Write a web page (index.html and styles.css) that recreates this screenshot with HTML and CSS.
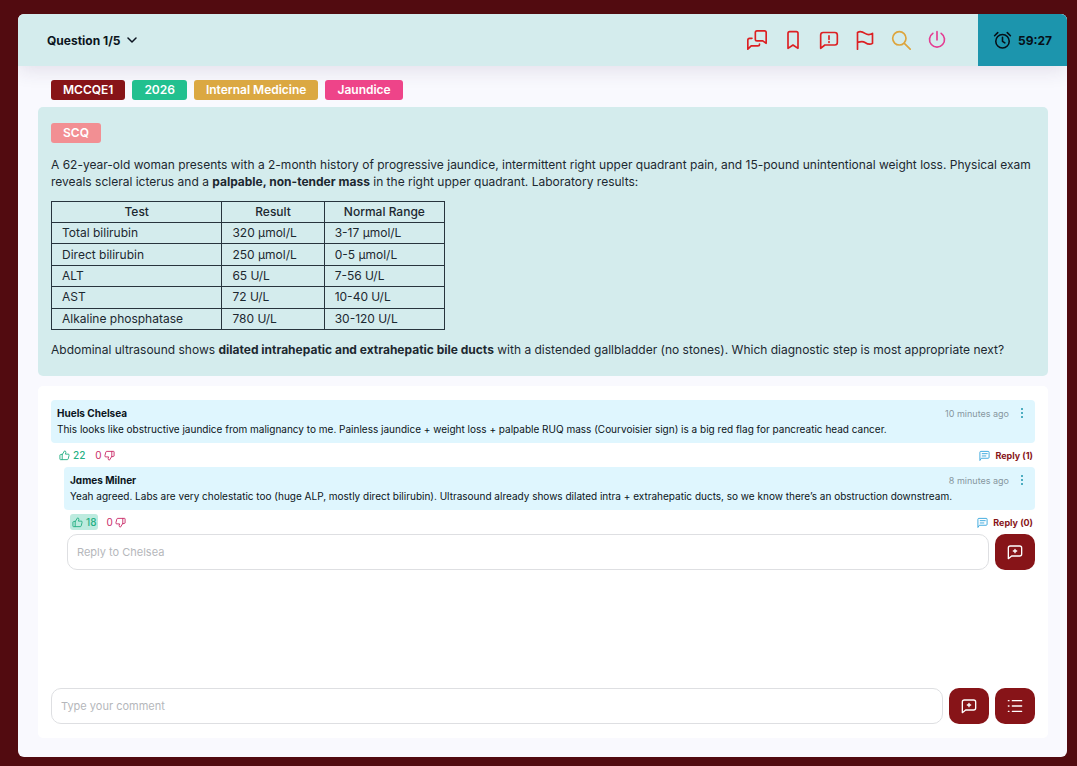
FILE: index.html
```html
<!DOCTYPE html>
<html lang="en">
<head>
  <meta charset="UTF-8" />
  <meta name="viewport" content="width=device-width, initial-scale=1.0"/>
  <title>Question 1/5</title>
  <link rel="stylesheet" href="styles.css">
</head>
<body>
  <!-- Shared icons -->
  <svg class="sprite" aria-hidden="true">
    <symbol id="thumb" viewBox="0 0 24 24">
      <path d="M7 10v11H3a1 1 0 0 1-1-1v-9a1 1 0 0 1 1-1zM7 10l5-8c2 0 3 1.300 3 3l-1 4h6a2 2 0 0 1 2 2.500l-2 8a2 2 0 0 1-2 1.500H7"/>
    </symbol>
    <symbol id="reply" viewBox="0 0 24 24">
      <path d="M2 22V5a2 2 0 0 1 2-2h16a2 2 0 0 1 2 2v11a2 2 0 0 1-2 2H6zM7 8h11M7 13h8"/>
    </symbol>
    <symbol id="add" viewBox="0 0 24 24">
      <path d="M2 22V6a3 3 0 0 1 3-3h14a3 3 0 0 1 3 3v9a3 3 0 0 1-3 3H7zM12 8v5M9.500 10.500h5"/>
    </symbol>
    <symbol id="dots" viewBox="0 0 4 12">
      <circle cx="2" cy="2" r="1"/><circle cx="2" cy="6" r="1"/><circle cx="2" cy="10" r="1"/>
    </symbol>
  </svg>

  <div class="main">
    <header class="topbar">
      <button class="question-select">
        Question 1/5
        <svg class="chevron" viewBox="0 0 10 6"><path d="M1 1l4 4 4-4"/></svg>
      </button>
      <div class="tools">
        <button class="tool" aria-label="Discussion">
          <svg viewBox="0 0 24 24"><path d="M10 3a2 2 0 0 1 2-2h9a2 2 0 0 1 2 2v13l-4-3h-7a2 2 0 0 1-2-2zM6 10H3a2 2 0 0 0-2 2v11l4-4h8a2 2 0 0 0 2-2"/></svg>
        </button>
        <button class="tool" aria-label="Bookmark">
          <svg viewBox="0 0 24 24"><path d="M18 22l-6-4-6 4V4a2 2 0 0 1 2-2h8a2 2 0 0 1 2 2z"/></svg>
        </button>
        <button class="tool" aria-label="Report">
          <svg viewBox="0 0 24 24"><path d="M2 22V6a3 3 0 0 1 3-3h14a3 3 0 0 1 3 3v9a3 3 0 0 1-3 3H7zM12 7v4M12 14v1"/></svg>
        </button>
        <button class="tool" aria-label="Flag">
          <svg viewBox="0 0 24 24"><path d="M3 23V3c3-2 6-1 9 1s6 2 9 0v12c-3 2-6 1-9-1s-6-1-9 0"/></svg>
        </button>
        <button class="tool gold" aria-label="Search">
          <svg viewBox="0 0 24 24"><circle cx="10" cy="10" r="8"/><path d="M16 16l7 7"/></svg>
        </button>
        <button class="tool pink" aria-label="End session">
          <svg viewBox="0 0 24 24"><path d="M12 2v10M7 4a9 9 0 1 0 10 0"/></svg>
        </button>
      </div>
      <div class="timer">
        <svg viewBox="0 0 24 24"><circle cx="12" cy="13" r="8.500"/><path d="M12 8v5l3 2M2 6l4-4M22 6l-4-4"/></svg>
        <span>59:27</span>
      </div>
    </header>

    <main class="content">
      <div class="tags">
        <span class="tag exam">MCCQE1</span>
        <span class="tag year">2026</span>
        <span class="tag subject">Internal Medicine</span>
        <span class="tag topic">Jaundice</span>
      </div>

      <section class="question">
        <span class="tag scq">SCQ</span>
        <p>A 62-year-old woman presents with a 2-month history of progressive jaundice, intermittent right upper quadrant pain, and 15-pound unintentional weight loss. Physical exam reveals scleral icterus and a <strong>palpable, non-tender mass</strong> in the right upper quadrant. Laboratory results:</p>
        <table>
          <thead>
            <tr><th>Test</th><th>Result</th><th>Normal Range</th></tr>
          </thead>
          <tbody>
            <tr><td>Total bilirubin</td><td>320 µmol/L</td><td>3-17 µmol/L</td></tr>
            <tr><td>Direct bilirubin</td><td>250 µmol/L</td><td>0-5 µmol/L</td></tr>
            <tr><td>ALT</td><td>65 U/L</td><td>7-56 U/L</td></tr>
            <tr><td>AST</td><td>72 U/L</td><td>10-40 U/L</td></tr>
            <tr><td>Alkaline phosphatase</td><td>780 U/L</td><td>30-120 U/L</td></tr>
          </tbody>
        </table>
        <p>Abdominal ultrasound shows <strong>dilated intrahepatic and extrahepatic bile ducts</strong> with a distended gallbladder (no stones). Which diagnostic step is most appropriate next?</p>
      </section>

      <section class="discussion">
        <article class="comment">
          <div class="bubble">
            <div class="bubble-head">
              <h2>Huels Chelsea</h2>
              <time>10 minutes ago</time>
              <button class="more" aria-label="More"><svg><use href="#dots"/></svg></button>
            </div>
            <p>This looks like obstructive jaundice from malignancy to me. Painless jaundice + weight loss + palpable RUQ mass (Courvoisier sign) is a big red flag for pancreatic head cancer.</p>
          </div>
          <div class="actions">
            <button class="like"><svg><use href="#thumb"/></svg>22</button>
            <button class="dislike">0<svg><use href="#thumb"/></svg></button>
            <button class="reply"><svg><use href="#reply"/></svg>Reply (1)</button>
          </div>
        </article>

        <article class="comment nested">
          <div class="bubble">
            <div class="bubble-head">
              <h2>James Milner</h2>
              <time>8 minutes ago</time>
              <button class="more" aria-label="More"><svg><use href="#dots"/></svg></button>
            </div>
            <p>Yeah agreed. Labs are very cholestatic too (huge ALP, mostly direct bilirubin). Ultrasound already shows dilated intra + extrahepatic ducts, so we know there’s an obstruction downstream.</p>
          </div>
          <div class="actions">
            <button class="like active"><svg><use href="#thumb"/></svg>18</button>
            <button class="dislike">0<svg><use href="#thumb"/></svg></button>
            <button class="reply"><svg><use href="#reply"/></svg>Reply (0)</button>
          </div>
        </article>

        <form class="write reply-form">
          <input type="text" placeholder="Reply to Chelsea" aria-label="Reply to Chelsea">
          <button type="button" class="square" aria-label="Send reply"><svg><use href="#add"/></svg></button>
        </form>

        <form class="write comment-form">
          <input type="text" placeholder="Type your comment" aria-label="Type your comment">
          <button type="button" class="square" aria-label="Add comment"><svg><use href="#add"/></svg></button>
          <button type="button" class="square" aria-label="Show list"><svg viewBox="0 0 24 24"><path d="M8 4h14M8 12h14M8 20h14M2 4h1M2 12h1M2 20h1"/></svg></button>
        </form>
      </section>
    </main>
  </div>
</body>
</html>
```
FILE: styles.css
```css
* {
  margin: 0;
  padding: 0;
  box-sizing: border-box;
  font-family: Inter, "Liberation Sans", sans-serif;
}

body {
  min-height: 100vh;
  padding: 14px 10px 9px 18px;
  display: flex;
  background-color: #520b10;
  color: #0b1420;
}

button {
  border: none;
  background: none;
  color: inherit;
  cursor: pointer;
}

svg {
  display: block;
  fill: none;
  stroke: currentColor;
  stroke-width: 2;
  stroke-linecap: round;
  stroke-linejoin: round;
}

.sprite {
  display: none;
}

.main {
  flex: 1;
  min-width: 0;
  display: flex;
  flex-direction: column;
  border-radius: 6px;
  overflow: hidden;
  background-color: #f9f9fe;
}

.topbar {
  height: 52px;
  display: flex;
  align-items: center;
  background-color: #d4eced;
  box-shadow: 0 4px 20px rgba(60, 30, 80, 0.12);
}

.question-select {
  display: flex;
  align-items: center;
  gap: 7px;
  margin-left: 29px;
  font-size: 12px;
  font-weight: 700;
}

.chevron {
  width: 10px;
  height: 6px;
  stroke-width: 1.500;
}

.tools {
  display: flex;
  gap: 16px;
  margin-left: auto;
  margin-right: 31px;
}

.tool {
  color: #dc2023;
}

.tool svg {
  width: 20px;
  height: 20px;
}

.tool.gold {
  color: #dda53d;
}

.tool.pink {
  color: #e43d92;
}

.timer {
  width: 89px;
  height: 100%;
  display: flex;
  align-items: center;
  justify-content: center;
  gap: 6px;
  background-color: #1c95ad;
  color: #071018;
  font-size: 12px;
  font-weight: 700;
}

.timer svg {
  width: 19px;
  height: 19px;
}

.content {
  flex: 1;
  display: flex;
  flex-direction: column;
  padding: 14px 19px 19px 20px;
}

.tags {
  display: flex;
  flex-wrap: wrap;
  gap: 7px;
  padding: 0 13px;
  margin-bottom: 7px;
}

.tag {
  display: inline-block;
  padding: 0 12px;
  border-radius: 3px;
  color: #fff;
  font-size: 12px;
  font-weight: 600;
  line-height: 20px;
}

.exam { background-color: #871418; }
.year { background-color: #22c08f; }
.subject { background-color: #dba842; }
.topic { background-color: #ee4489; }
.scq { background-color: #f28f93; }

.question {
  padding: 16px 13px 18px;
  border-radius: 5px;
  background-color: #d4eced;
  color: #1c2830;
  font-size: 12px;
}

.question p {
  margin-top: 11px;
  line-height: 17px;
}

.scq + p {
  margin-top: 13px;
}

.question strong {
  font-weight: 700;
}

.question table {
  width: 394px;
  height: 129px;
  margin-top: 11px;
  border-collapse: collapse;
}

.question th,
.question td {
  width: 102px;
  padding: 0 10px;
  border: 1px solid #27343d;
  line-height: 20px;
}

.question th {
  font-weight: 500;
}

.question th:first-child {
  width: 170px;
}

.question th:last-child {
  width: 120px;
}

.discussion {
  flex: 1;
  display: flex;
  flex-direction: column;
  margin-top: 10px;
  padding: 14px 13px;
  border-radius: 5px;
  background-color: #fff;
}

.comment.nested {
  margin-left: 13px;
}

.bubble {
  padding: 5px 11px 5px 6px;
  border-radius: 4px;
  background-color: #dff6fe;
}

.bubble-head {
  display: flex;
  align-items: center;
  height: 16px;
}

.bubble h2 {
  flex: 1;
  font-size: 10px;
  font-weight: 700;
}

.nested h2 {
  font-feature-settings: "cv11";
}

.bubble p {
  font-size: 10px;
  line-height: 17px;
}

.bubble time {
  color: #87979f;
  font-size: 9px;
}

.more {
  margin-left: 11px;
  color: #1c95ad;
}

.more svg {
  width: 4px;
  height: 12px;
  fill: currentColor;
  stroke: none;
}

.actions {
  display: flex;
  align-items: center;
  height: 24px;
  gap: 6px;
  padding: 0 2px 0 6px;
}

.actions button {
  display: flex;
  align-items: center;
  gap: 3px;
  height: 16px;
  padding: 0 2px;
  border-radius: 3px;
  font-size: 10px;
}

.actions svg {
  width: 11px;
  height: 11px;
}

.actions .like {
  color: #25b084;
  font-weight: 500;
}

.actions .like.active {
  background-color: #bdebdf;
}

.actions .dislike {
  gap: 2px;
  color: #c92c68;
}

.dislike svg {
  transform: rotate(180deg);
}

.actions .reply {
  gap: 5px;
  margin-left: auto;
  padding: 0;
  color: #871418;
  font-size: 9px;
  font-weight: 700;
}

.reply svg {
  color: #35a5dc;
}

.write {
  display: flex;
  gap: 6px;
}

.write input {
  flex: 1;
  min-width: 0;
  height: 36px;
  padding: 0 9px;
  border: 1px solid #dedfe2;
  border-radius: 10px;
  background-color: #fff;
  font-size: 11px;
}

.write input::placeholder {
  color: #b5b7bb;
}

.square {
  display: flex;
  align-items: center;
  justify-content: center;
  width: 40px;
  height: 36px;
  border-radius: 10px;
  background-color: #871418;
  color: #fff;
}

.square svg {
  width: 16px;
  height: 16px;
}

.reply-form {
  margin-left: 16px;
}

.comment-form {
  margin-top: auto;
}
```
